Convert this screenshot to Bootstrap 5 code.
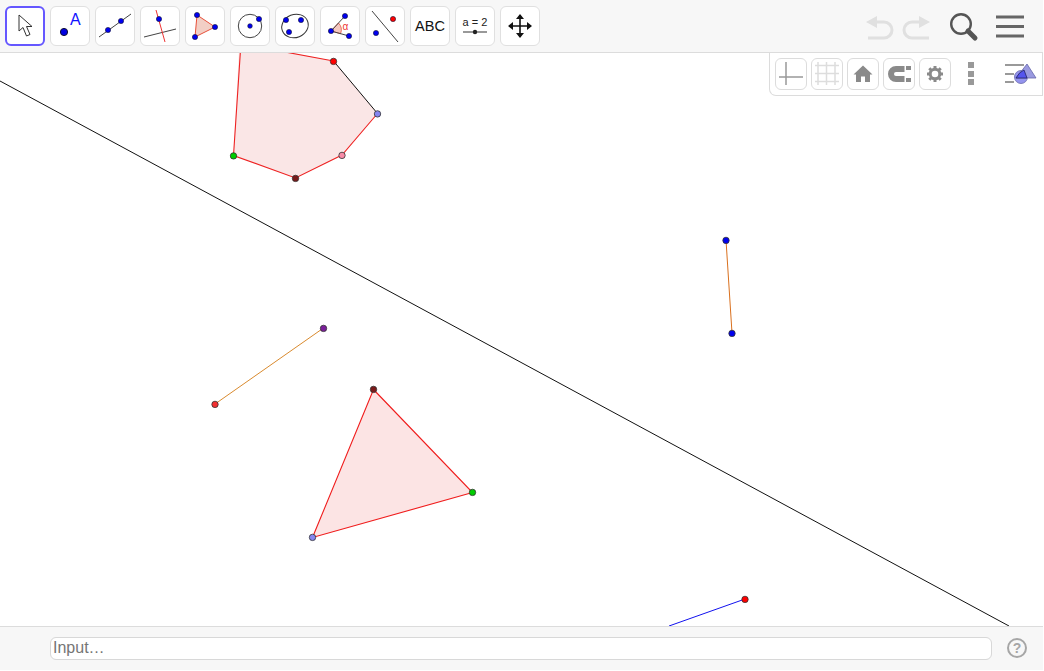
<!DOCTYPE html>
<html lang="en">
<head>
<meta charset="utf-8">
<title>GeoGebra</title>
<link href="https://cdn.jsdelivr.net/npm/bootstrap@5.3.0/dist/css/bootstrap.min.css" rel="stylesheet">
<style>
html,body{margin:0;height:100%;background:#fff;overflow:hidden}
body{font-family:"Liberation Sans",Arial,sans-serif}
.gg-app{width:1043px;height:670px}
.gg-top{height:53px;background:#f7f7f7;border-bottom:1px solid #dcdcdc;padding:6px 0 0 5px;flex:none}
.gg-tool{width:40px;height:40px;padding:0;background:#fff;border:1px solid #e0e0e0;border-radius:6px;flex:none;color:#000;line-height:1;font-size:14px}
.gg-tool:hover{background:#fff;border-color:#e0e0e0}
.gg-tool.gg-on{border:2px solid #6557ff}
.gg-tool svg,.gg-mini svg,.gg-acts svg{display:block}
.gg-tool .gg-abc{font-family:"Liberation Sans",Arial,sans-serif;font-size:14.5px;color:#111}
.gg-dots circle{fill:#0000f0;stroke:#113;stroke-width:.6}
.gg-acts{margin-top:-6px;height:52px}
.gg-canvas{flex:1 1 auto;min-height:0;background:#fff}
.gg-canvas>svg{display:block}
.gg-panel{position:absolute;top:0;right:0;width:274px;height:43px;background:#fff;border:1px solid #dcdcdc;border-top:0;border-radius:0 0 0 7px;padding:5px 0 0 5px}
.gg-mini{width:32px;height:32px;padding:0;background:#fff;border:1px solid #dcdcdc;border-radius:6px;flex:none}
.gg-mini:hover{background:#fff;border-color:#dcdcdc}
.gg-bot{height:44px;background:#f7f7f7;border-top:1px solid #dcdcdc;flex:none;padding:0 0 1px 50px}
.gg-input.form-control{width:942px;height:23px;min-height:0;padding:0 2px;font-size:16px;line-height:20px;border:1px solid #d8d8d8;border-radius:6px;color:#333;font-family:"Liberation Sans",Arial,sans-serif;box-shadow:none}
.gg-input.form-control::placeholder{color:#757575;opacity:1}
.gg-help{width:20px;height:20px;margin-left:15px;border:2px solid #a6a6a6;border-radius:50%;color:#a6a6a6;font-size:14px;font-weight:700;line-height:1;flex:none}
</style>
</head>
<body>
<div class="gg-app d-flex flex-column">
  <div class="gg-top d-flex gap-0">
    <div class="d-flex" style="gap:5px">
      <button class="btn gg-tool gg-on" aria-label="Move"><svg width="36" height="36" viewBox="2 2 36 36"><path d="M14 9V25L18 21.5L21.5 30L25 28.5L21.5 20.5L27 20.5Z" fill="#fff" stroke="#333" stroke-width="1"/></svg></button>
      <button class="btn gg-tool" aria-label="Point"><svg width="38" height="38" viewBox="1 1 38 38"><circle cx="14" cy="26" r="3.6" fill="#0000e0" stroke="#113"/><text x="20" y="19" font-size="16" fill="#11f" font-family="Liberation Sans">A</text></svg></button>
      <button class="btn gg-tool" aria-label="Line"><svg width="38" height="38" viewBox="1 1 38 38"><line x1="4" y1="31" x2="36" y2="8" stroke="#444"/><g class="gg-dots"><circle cx="13" cy="24" r="2.600"/><circle cx="26" cy="15" r="2.600"/></g></svg></button>
      <button class="btn gg-tool" aria-label="Perpendicular"><svg width="38" height="38" viewBox="1 1 38 38"><line x1="4" y1="31" x2="36" y2="23" stroke="#444"/><line x1="16" y1="4" x2="25" y2="36" stroke="#e33"/><g class="gg-dots"><circle cx="19" cy="13" r="2.600"/></g></svg></button>
      <button class="btn gg-tool" aria-label="Polygon"><svg width="38" height="38" viewBox="1 1 38 38"><polygon points="12,9 30,21 10,31" fill="#f2cfc5" stroke="#e8503a"/><g class="gg-dots"><circle cx="12" cy="9" r="2.600"/><circle cx="30" cy="21" r="2.600"/><circle cx="10" cy="31" r="2.600"/></g></svg></button>
      <button class="btn gg-tool" aria-label="Circle"><svg width="38" height="38" viewBox="1 1 38 38"><circle cx="20" cy="20" r="11.700" fill="none" stroke="#444"/><g class="gg-dots"><circle cx="20" cy="20" r="2.300"/><circle cx="29" cy="13" r="2.600"/></g></svg></button>
      <button class="btn gg-tool" aria-label="Conic"><svg width="38" height="38" viewBox="1 1 38 38"><ellipse cx="20" cy="20" rx="13.500" ry="11.500" transform="rotate(-22 20 20)" fill="none" stroke="#333"/><g class="gg-dots"><circle cx="11" cy="14" r="2.600"/><circle cx="26" cy="14" r="2.600"/><circle cx="14" cy="26" r="2.600"/></g></svg></button>
      <button class="btn gg-tool" aria-label="Angle"><svg width="38" height="38" viewBox="1 1 38 38"><path d="M11 25L18.500 17A10 10 0 0 1 20.500 27.700Z" fill="#f5c8c0" stroke="#e8503a" stroke-width=".8"/><line x1="11" y1="25" x2="25" y2="10" stroke="#444"/><line x1="11" y1="25" x2="29" y2="30" stroke="#444"/><g class="gg-dots"><circle cx="11" cy="25" r="2.600"/><circle cx="25" cy="10" r="2.600"/><circle cx="29" cy="30" r="2.600"/></g><text x="22.500" y="24" font-size="10" fill="#e33" font-family="Liberation Sans">α</text></svg></button>
      <button class="btn gg-tool" aria-label="Reflect"><svg width="38" height="38" viewBox="1 1 38 38"><line x1="7" y1="5" x2="33" y2="36" stroke="#444"/><g class="gg-dots"><circle cx="11" cy="27" r="2.600"/><circle cx="28" cy="13" r="2.600" style="fill:#f00"/></g></svg></button>
      <button class="btn gg-tool d-flex align-items-center justify-content-center"><span class="gg-abc">ABC</span></button>
      <button class="btn gg-tool" aria-label="Slider"><svg width="38" height="38" viewBox="1 1 38 38"><text x="20" y="20" text-anchor="middle" font-size="11" fill="#222" font-family="Liberation Sans">a = 2</text><line x1="8" y1="26" x2="32" y2="26" stroke="#555" stroke-width="1.200"/><circle cx="20" cy="26" r="2.200" fill="#222"/></svg></button>
      <button class="btn gg-tool" aria-label="Move view"><svg width="38" height="38" viewBox="1 1 38 38"><path d="M20 9V31M9 20H31" stroke="#111" stroke-width="1.600"/><path d="M20 8L16 13H24ZM20 32L16 27H24ZM8 20L13 16V24ZM32 20L27 16V24Z" fill="#111"/></svg></button>
    </div>
    <div class="gg-acts ms-auto position-relative">
      <svg width="190" height="52" viewBox="853 0 190 52">
        <g fill="none" stroke="#e0e0e0" stroke-width="3"><path d="M874 22H884A8 8 0 0 1 884 38H868"/><path d="M922 22H912A8 8 0 0 0 912 38H929"/></g>
        <path d="M866 22L877 16V28ZM930 22L919 16V28Z" fill="#e0e0e0"/>
        <circle cx="961" cy="24" r="9.800" fill="none" stroke="#555" stroke-width="2.400"/>
        <path d="M968 31L975 38" stroke="#555" stroke-width="5" stroke-linecap="round"/>
        <path d="M996 17H1024M996 26.500H1024M996 36H1024" stroke="#666" stroke-width="3"/>
      </svg>
    </div>
  </div>
  <div class="gg-canvas position-relative">
    <svg width="1043" height="573" viewBox="0 53 1043 573">
      <polygon points="233.500,155.500 295.500,178 342,155 377.500,113.500 333.500,61 262,47 240,30" fill="#fae6e6"/>
      <path d="M240.500 50L233.500 155.500L295.500 178L342 155L377.500 113.500" fill="none" stroke="#ee2222" stroke-width="1.100"/>
      <path d="M333.500 61L285 52" fill="none" stroke="#ee2222" stroke-width="1.100"/>
      <line x1="333.500" y1="61" x2="377.500" y2="113.500" stroke="#111" stroke-width="1"/>
      <line x1="0" y1="81" x2="1009" y2="626" stroke="#111" stroke-width="1"/>
      <line x1="726" y1="240" x2="732" y2="333" stroke="#d9701e" stroke-width="1"/>
      <line x1="215" y1="404" x2="323.500" y2="328" stroke="#d98a2e" stroke-width="1"/>
      <polygon points="373.500,389.500 472.500,492.500 312.500,537.500" fill="#fce4e4" stroke="#f01c1c" stroke-width="1.100"/>
      <line x1="745" y1="599" x2="669" y2="626" stroke="#1111ee" stroke-width="1"/>
      <g stroke="#333" stroke-width=".8" transform="translate(0 .4)">
        <circle cx="233.500" cy="155.500" r="3.200" fill="#0c0"/>
        <circle cx="295.500" cy="178" r="3.200" fill="#7a1a1a"/>
        <circle cx="342" cy="155" r="3.200" fill="#f88ca8"/>
        <circle cx="377.500" cy="113.500" r="3.200" fill="#8585f0"/>
        <circle cx="333.500" cy="61" r="3.200" fill="#f00"/>
        <circle cx="726" cy="240" r="3.200" fill="#00e"/>
        <circle cx="732" cy="333" r="3.200" fill="#00e"/>
        <circle cx="323.500" cy="328" r="3.200" fill="#7a1f9a"/>
        <circle cx="215" cy="404" r="3.200" fill="#f23030"/>
        <circle cx="373.500" cy="389" r="3.200" fill="#7a1a1a"/>
        <circle cx="472.500" cy="492" r="3.200" fill="#0c0"/>
        <circle cx="312.500" cy="537" r="3.200" fill="#8585f0"/>
        <circle cx="745" cy="599" r="3.200" fill="#f00"/>
      </g>
    </svg>
    <div class="gg-panel d-flex">
      <div class="d-flex" style="gap:4px">
        <button class="btn gg-mini" aria-label="Axes"><svg width="30" height="30" viewBox="1 1 30 30"><path d="M11 4V27M4 19H28" stroke="#999" stroke-width="1.500"/></svg></button>
        <button class="btn gg-mini" aria-label="Grid"><svg width="30" height="30" viewBox="1 1 30 30"><path d="M7 4V27M15.500 4V27M24 4V27M4 7.500H28M4 15.500H28M4 23.500H28" stroke="#ddd" stroke-width="1.500"/></svg></button>
        <button class="btn gg-mini" aria-label="Home"><svg width="30" height="30" viewBox="1 1 30 30"><path d="M16 7.500L25.500 16.500H23V24H18V18.500H14V24H9V16.500H6.500Z" fill="#8a8a8a"/></svg></button>
        <button class="btn gg-mini" aria-label="Snap"><svg width="30" height="30" viewBox="1 1 30 30"><path d="M21.500 11H13A5 5 0 0 0 13 21H21.500" fill="none" stroke="#8a8a8a" stroke-width="6"/><path d="M23 8H28V12H23ZM23 20H28V24H23Z" fill="#8a8a8a"/></svg></button>
        <button class="btn gg-mini" aria-label="Settings"><svg width="30" height="30" viewBox="1 1 30 30"><circle cx="16" cy="16" r="4.800" fill="none" stroke="#8a8a8a" stroke-width="3"/><path d="M16 8V11M16 21V24M8 16H11M21 16H24M10.300 10.300L12.500 12.500M19.500 19.500L21.700 21.700M21.700 10.300L19.500 12.500M12.500 19.500L10.300 21.700" stroke="#8a8a8a" stroke-width="3"/></svg></button>
      </div>
      <svg class="ms-auto" width="74" height="43" viewBox="968 53 74 43" style="margin-top:-5px">
        <path d="M968 62H974V68H968ZM968 71H974V77H968ZM968 79H974V85H968Z" fill="#999"/>
        <path d="M1005 65H1024M1005 74H1014M1005 82H1014" stroke="#999" stroke-width="1.800"/>
        <circle cx="1021" cy="77" r="6.500" fill="#9494ee" stroke="#6666aa" stroke-width=".8"/>
        <polygon points="1027,64 1016,78 1036,78" fill="#9a9ae0" stroke="#6666aa" stroke-width=".8"/>
        <path d="M1019.500 73L1024 70L1027 78H1016Z" fill="#5555ee" stroke="#222266" stroke-width=".8"/>
      </svg>
    </div>
  </div>
  <div class="gg-bot d-flex align-items-center">
    <input class="form-control gg-input" type="text" placeholder="Input…">
    <div class="gg-help d-flex align-items-center justify-content-center">?</div>
  </div>
</div>
<script src="https://cdn.jsdelivr.net/npm/bootstrap@5.3.0/dist/js/bootstrap.bundle.min.js"></script>
</body>
</html>
